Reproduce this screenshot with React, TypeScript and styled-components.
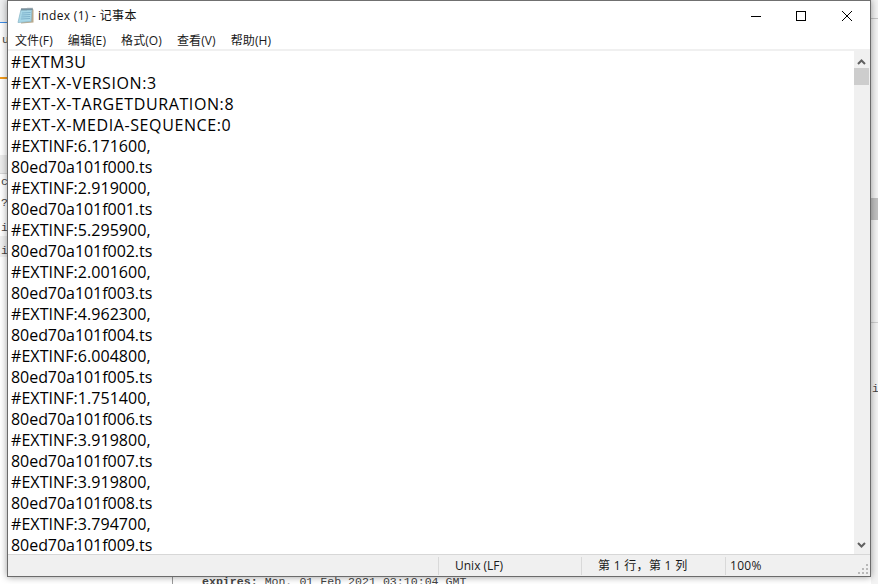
import React from "react";
import styled, { createGlobalStyle } from "styled-components";

const Global = createGlobalStyle`
  html, body { margin: 0; padding: 0; width: 878px; height: 584px; overflow: hidden; background: #fff; }
  * { box-sizing: border-box; }
`;
const Desktop = styled.div`
  position: relative; width: 878px; height: 584px; overflow: hidden; background: #fff;
  font-family: "Liberation Mono", monospace; color: #333;
`;
const Fragment = styled.div<{ $x: number; $y: number; $w: number; $h: number; $bg: string }>`
  position: absolute; left: ${(p) => p.$x}px; top: ${(p) => p.$y}px;
  width: ${(p) => p.$w}px; height: ${(p) => p.$h}px; background: ${(p) => p.$bg};
`;
const Peek = styled.span<{ $x: number; $y: number }>`
  position: absolute; left: ${(p) => p.$x}px; top: ${(p) => p.$y}px;
  font: 11.6px/16px "Liberation Mono", monospace; color: #444; white-space: pre;
`;
const Window = styled.div`
  position: absolute; left: 7px; top: 0; width: 864px; height: 577px;
  display: flex; flex-direction: column; background: #fff;
  border: 1px solid #6b6b6b; border-top-color: #707070;
  box-shadow: 0 0 7px rgba(0,0,0,.4);
  font-family: "Noto Sans CJK SC", "Liberation Sans", sans-serif; color: #000;
`;
const TitleBar = styled.div`
  height: 30px; display: flex; align-items: center; flex: none; padding-left: 9px;
`;
const TitleText = styled.span`
  margin-left: 3px; font-size: 12px; line-height: 30px; color: #111; flex: 1; letter-spacing: .32px;
  font-family: "Open Sans", "Noto Sans CJK SC", sans-serif;
`;
const Caption = styled.div<{ $w: number }>`
  width: ${(p) => p.$w}px; height: 30px; display: flex; align-items: center; justify-content: center;
`;
const MenuBar = styled.div`
  height: 18px; flex: none; display: flex; padding-left: 7px; gap: 15px; align-items: center;
  font-family: "Open Sans", "Noto Sans CJK SC", sans-serif; font-size: 12px; color: #1a1a1a;
  letter-spacing: .1px;
`;
const MenuDivider = styled.div`
  height: 2px; flex: none; background: #f0f0f0;
`;
const Editor = styled.div`
  flex: 1; display: flex; min-height: 0;
`;
const TextArea = styled.div`
  flex: 1; overflow: hidden; padding: 1px 0 0 3px; min-width: 0;
  font-family: "Open Sans", sans-serif; font-size: 16px; line-height: 21px; color: #000;
`;
const Line = styled.div<{ $spacing: number }>`
  height: 21px; white-space: pre; letter-spacing: ${(p) => p.$spacing}px;
`;
const ScrollBar = styled.div`
  width: 16px; flex: none; background: #f0f0f0; display: flex; flex-direction: column;
  align-items: center; padding: 8px 1px 0 0;
`;
const Thumb = styled.div`
  width: 15px; height: 17px; margin-top: 3px; background: #cdcdcd;
`;
const Spacer = styled.div`flex: 1;`;
const DownArrow = styled.svg`
  margin-bottom: 6px;
`;
const Status = styled.div`
  height: 22px; flex: none; display: flex; background: #f0f0f0; border-top: 1px solid #d7d7d7;
  font-family: "Open Sans", "Noto Sans CJK SC", sans-serif; font-size: 12px; color: #1a1a1a;
  position: relative;
`;
const Cell = styled.div<{ $w: number; $pad: number; $grow?: boolean; $spacing?: number }>`
  width: ${(p) => p.$w}px; flex: ${(p) => (p.$grow ? "1" : "none")};
  padding-left: ${(p) => p.$pad}px; line-height: 22px; white-space: pre;
  letter-spacing: ${(p) => p.$spacing ?? 0}px;
  position: relative;
  &::before {
    content: ""; position: absolute; left: 0; top: 2px; bottom: 1px; width: 1px; background: #d9d9d9;
  }
`;
const FirstCell = styled.div`
  width: 430px; flex: none;
`;
const Grip = styled.svg`
  position: absolute; right: 2px; bottom: 2px;
`;

const lines = [
  "#EXTM3U", "#EXT-X-VERSION:3", "#EXT-X-TARGETDURATION:8", "#EXT-X-MEDIA-SEQUENCE:0",
  "#EXTINF:6.171600,", "80ed70a101f000.ts", "#EXTINF:2.919000,", "80ed70a101f001.ts",
  "#EXTINF:5.295900,", "80ed70a101f002.ts", "#EXTINF:2.001600,", "80ed70a101f003.ts",
  "#EXTINF:4.962300,", "80ed70a101f004.ts", "#EXTINF:6.004800,", "80ed70a101f005.ts",
  "#EXTINF:1.751400,", "80ed70a101f006.ts", "#EXTINF:3.919800,", "80ed70a101f007.ts",
  "#EXTINF:3.919800,", "80ed70a101f008.ts", "#EXTINF:3.794700,", "80ed70a101f009.ts",
];
const spacingFor = (l: string) => {
  if (l === "#EXTM3U") return 0.4;
  if (l.startsWith("#EXT-X")) return 0.6;
  if (l.startsWith("#EXTINF")) return 0.06;
  return -0.05;
};

const NotepadIcon = () => (
  <svg width="18" height="18" viewBox="0 0 18 18">
    <path d="M5.5 3 L16.5 2.5 L16.5 15.5 L4 16.5 Z" fill="#b9a98c" />
    <path d="M4 2.5 L15 2 L14 14.5 L1 15.5 Z" fill="#a8d8e8" stroke="#8fb9c9" strokeWidth=".8" />
    <path d="M5 6 L13.6 5.5 M4.6 8 L13.4 7.5 M4.2 10 L13.2 9.5 M3.8 12 L13 11.5" stroke="#7fb3cc" strokeWidth="1" />
    <path d="M5 1 V3.5 M7 1 V3.5 M9 1 V3.5 M11 .8 V3.3 M13 .8 V3.3 M15 .8 V3.1" stroke="#4a5f6c" strokeWidth="1" />
  </svg>
);

export default function App() {
  return (
    <Desktop>
      <Global />
      <Fragment $x={0} $y={0} $w={7} $h={22} $bg="#eeeff0" />
      <Fragment $x={0} $y={22} $w={7} $h={1} $bg="#3c8ce7" />
      <Fragment $x={0} $y={77} $w={7} $h={2} $bg="#f29b1d" />
      <Fragment $x={0} $y={155} $w={7} $h={18} $bg="#ececec" />
      <Fragment $x={0} $y={173} $w={7} $h={1} $bg="#d5d5d5" />
      <Fragment $x={0} $y={236} $w={7} $h={21} $bg="#f1f1f1" />
      <Fragment $x={871} $y={0} $w={7} $h={584} $bg="#f3f3f3" />
      <Fragment $x={871} $y={18} $w={7} $h={1} $bg="#c4c4c4" />
      <Fragment $x={871} $y={198} $w={7} $h={22} $bg="#c0c0c0" />
      <Fragment $x={871} $y={322} $w={7} $h={1} $bg="#cfcfcf" />
      <Fragment $x={172} $y={577} $w={1} $h={7} $bg="#9a9a9a" />
      <Peek $x={2} $y={32}>u</Peek>
      <Peek $x={1} $y={174}>c</Peek>
      <Peek $x={1} $y={195}>?</Peek>
      <Peek $x={1} $y={220}>i</Peek>
      <Peek $x={1} $y={243}>i</Peek>
      <Peek $x={872} $y={381}>i</Peek>
      <Peek $x={202} $y={574}><b>expires:</b> Mon, 01 Feb 2021 03:10:04 GMT</Peek>
      <Window>
        <TitleBar>
          <NotepadIcon />
          <TitleText>index (1) - 记事本</TitleText>
          <Caption $w={44}>
            <svg width="10" height="10" viewBox="0 0 10 10"><path d="M0 5.5H10" stroke="#000" /></svg>
          </Caption>
          <Caption $w={46}>
            <svg width="10" height="10" viewBox="0 0 10 10"><rect x=".5" y=".5" width="9" height="9" fill="none" stroke="#000" /></svg>
          </Caption>
          <Caption $w={46}>
            <svg width="10" height="10" viewBox="0 0 10 10"><path d="M0 0L10 10M10 0L0 10" stroke="#000" /></svg>
          </Caption>
        </TitleBar>
        <MenuBar>
          <span>文件(F)</span><span>编辑(E)</span><span>格式(O)</span><span>查看(V)</span><span>帮助(H)</span>
        </MenuBar>
        <MenuDivider />
        <Editor>
          <TextArea>
            {lines.map((l, i) => <Line key={i} $spacing={spacingFor(l)}>{l}</Line>)}
          </TextArea>
          <ScrollBar>
            <svg width="9" height="6" viewBox="0 0 9 6"><path d="M1 5L4.5 1.5L8 5" fill="none" stroke="#606060" strokeWidth="2" /></svg>
            <Thumb />
            <Spacer />
            <DownArrow width="9" height="6" viewBox="0 0 9 6"><path d="M1 1L4.5 4.5L8 1" fill="none" stroke="#606060" strokeWidth="2" /></DownArrow>
          </ScrollBar>
        </Editor>
        <Status>
          <FirstCell />
          <Cell $w={143} $pad={17}>Unix (LF)</Cell>
          <Cell $w={144} $pad={17} $spacing={0.3}>第 1 行，第 1 列</Cell>
          <Cell $w={0} $grow $pad={5} $spacing={0.3}>100%</Cell>
          <Grip width="10" height="10" viewBox="0 0 10 10">
            <path d="M8 0h2v2H8zM4 4h2v2H4zM8 4h2v2H8zM0 8h2v2H0zM4 8h2v2H4zM8 8h2v2H8z" fill="#b9b9b9" />
          </Grip>
        </Status>
      </Window>
    </Desktop>
  );
}
